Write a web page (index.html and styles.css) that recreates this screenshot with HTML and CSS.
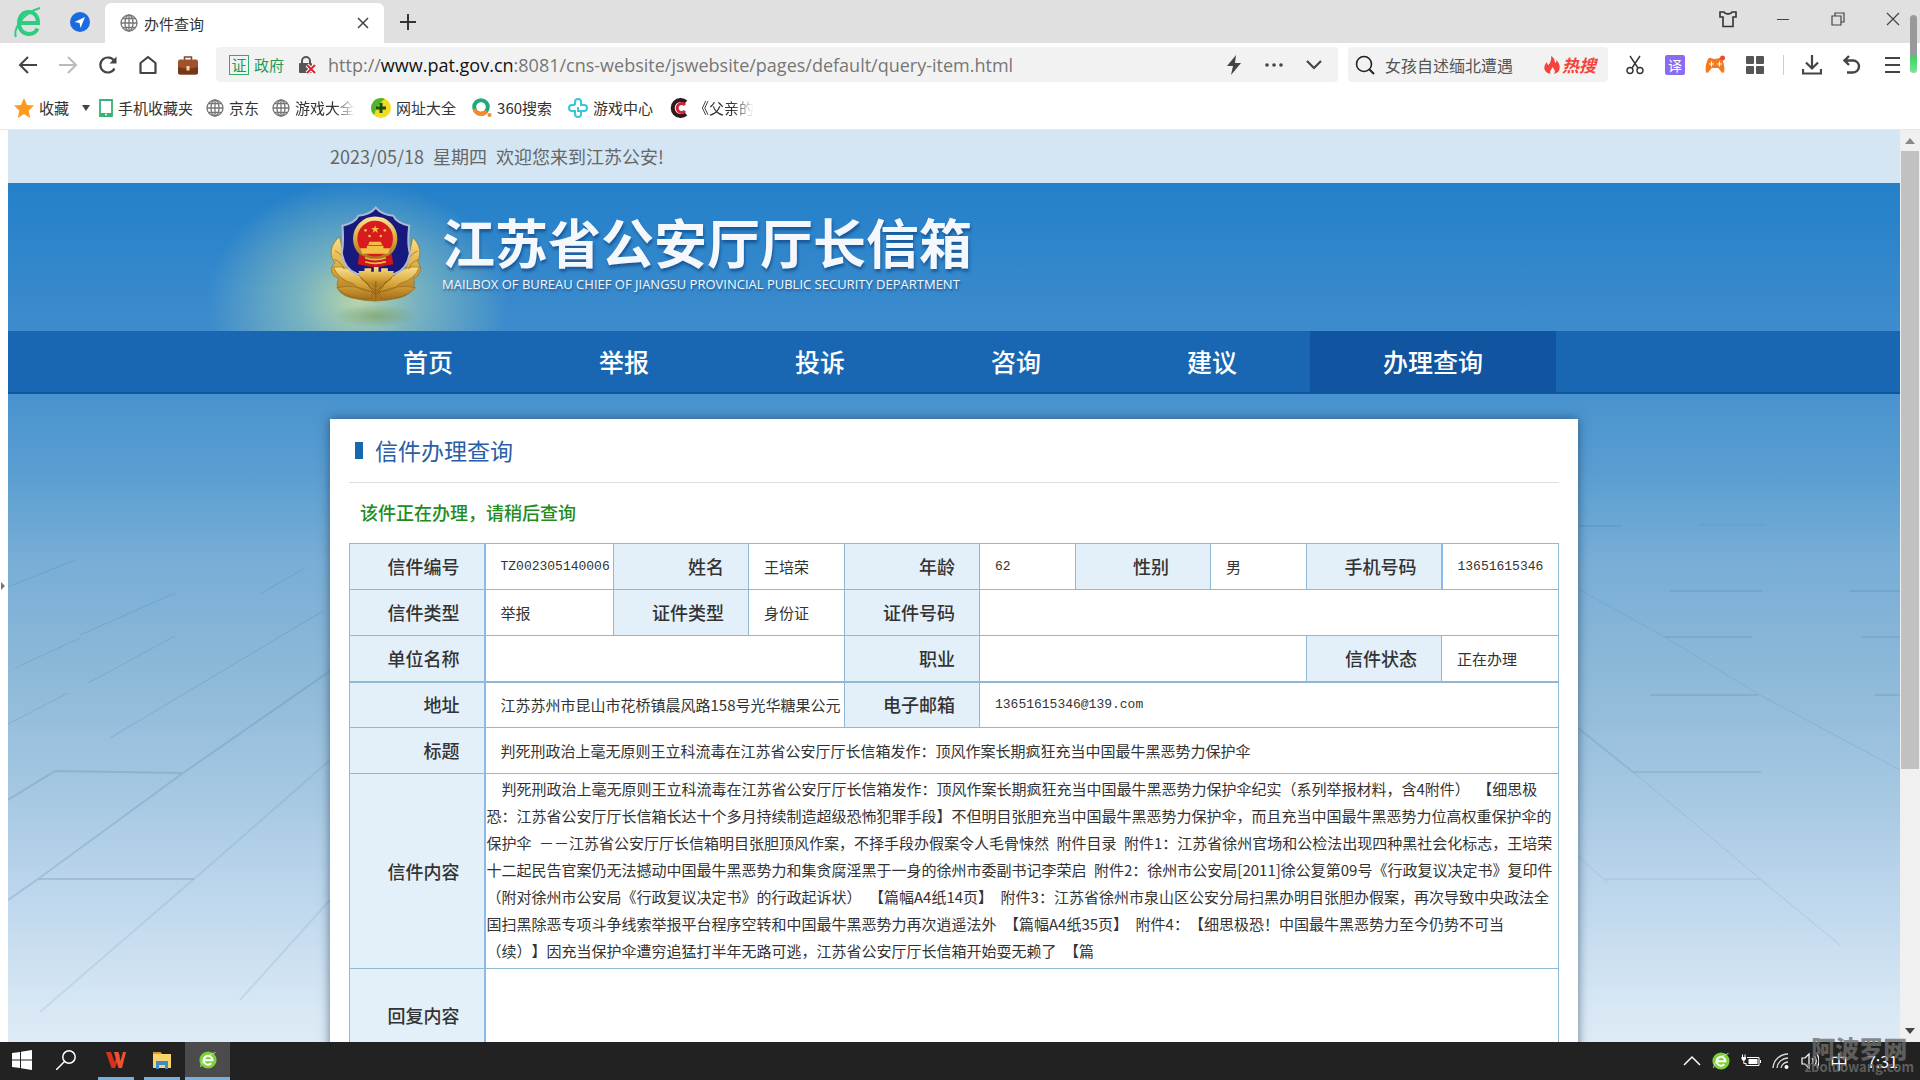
FILE: index.html
```html
<!DOCTYPE html>
<html lang="zh-CN">
<head>
<meta charset="UTF-8">
<meta name="viewport" content="width=device-width, initial-scale=1">
<title>办件查询</title>
<link rel="stylesheet" href="styles.css">
</head>
<body>
  <svg class="defs" aria-hidden="true">
    <symbol id="globe" viewBox="0 0 18 18"><g fill="none" stroke="#777" stroke-width="1.3"><circle cx="9" cy="9" r="8"/><ellipse cx="9" cy="9" rx="4" ry="8"/><path d="M9 1v16M1 9h16M2.5 4.5h13M2.5 13.5h13"/></g></symbol>
    <symbol id="e360" viewBox="0 0 18 18"><circle cx="9" cy="9" r="8.6" fill="#7ed03a"/><path d="M4.500 9.300h9a4.500 4.500 0 1 0-1.200 3" fill="none" stroke="#fff" stroke-width="2"/><path d="M1.500 16C2 11 8 4 16.500 1.500" fill="none" stroke="#d9f3c0" stroke-width=".8"/></symbol>
  </svg>

  <!-- Onglets du navigateur -->
  <header class="tabbar">
    <svg class="logo" viewBox="0 0 28 32"><g fill="none" stroke="#2ecc80"><path d="M5 17h19c0-7-4-11-9.500-11S5 10.500 5 17s4 11 10 11c4 0 7-2 8.500-5.500" stroke-width="4"/><path d="M2 31C-1 24 8 7 26 2" stroke-width="2"/></g></svg>
    <svg class="compass" viewBox="0 0 20 20"><circle cx="10" cy="10" r="10" fill="#1a6be0"/><path d="M15 5L4.500 10l5 1 1 5z" fill="#fff"/></svg>
    <div class="tab">
      <svg class="i18"><use href="#globe"/></svg>
      <span>办件查询</span>
      <button class="btn" aria-label="关闭标签"><svg width="12" height="12" viewBox="0 0 12 12"><path d="M1 1l10 10M11 1L1 11" stroke="#444" stroke-width="1.500"/></svg></button>
    </div>
    <button class="btn" aria-label="新标签页"><svg width="16" height="16" viewBox="0 0 16 16"><path d="M8 0v16M0 8h16" stroke="#333" stroke-width="2"/></svg></button>
    <div class="window-btns">
      <button class="btn" aria-label="皮肤"><svg width="18" height="18" viewBox="0 0 18 18"><path d="M1 2h4c1 2.500 7 2.500 8 0h4v5h-3v9.500H4V7H1z" fill="none" stroke="#333" stroke-width="1.600"/></svg></button>
      <button class="btn" aria-label="最小化"><svg width="18" height="18" viewBox="0 0 18 18"><path d="M3 9.500h12" stroke="#444"/></svg></button>
      <button class="btn" aria-label="还原"><svg width="18" height="18" viewBox="0 0 18 18"><path d="M3 6h9v9H3zM6 6V3h9v9h-3" fill="none" stroke="#444" stroke-width="1.200"/></svg></button>
      <button class="btn" aria-label="关闭"><svg width="18" height="18" viewBox="0 0 18 18"><path d="M3 3l12 12M15 3L3 15" stroke="#444" stroke-width="1.200"/></svg></button>
    </div>
  </header>

  <!-- Barre d'adresse -->
  <div class="toolbar">
    <nav class="nav-btns">
      <button class="btn" aria-label="后退"><svg class="i20" viewBox="0 0 20 20"><path d="M10 2L2 10l8 8M2 10h17" fill="none" stroke="#444" stroke-width="2"/></svg></button>
      <button class="btn" aria-label="前进"><svg class="i20" viewBox="0 0 20 20"><path d="M10 2l8 8-8 8M18 10H1" fill="none" stroke="#bbb" stroke-width="2"/></svg></button>
      <button class="btn" aria-label="刷新"><svg class="i20" viewBox="0 0 20 20"><path d="M16.500 13.500a7.500 7.500 0 1 1 0-7" fill="none" stroke="#444" stroke-width="2.200"/><path d="M18.500 1.500v7h-7z" fill="#444"/></svg></button>
      <button class="btn" aria-label="主页"><svg class="i20" viewBox="0 0 20 20"><path d="M2.500 8L10 2l7.500 6v10h-15z" fill="none" stroke="#444" stroke-width="2.200" stroke-linejoin="round"/></svg></button>
      <button class="btn" aria-label="工具箱"><svg class="i20" viewBox="0 0 20 20"><path d="M6.500 5V2h7v3" fill="none" stroke="#7b4a33" stroke-width="1.500"/><rect x="0" y="4.500" width="20" height="15" rx="2" fill="#a0522f"/><path d="M0 12q10 3 20 0v5.500a2 2 0 0 1-2 2H2a2 2 0 0 1-2-2z" fill="#753719"/><rect x="8.500" y="11" width="3" height="4.500" fill="#f4d9a0"/></svg></button>
    </nav>
    <div class="address">
      <span class="cert">证</span>
      <span class="gov">政府</span>
      <svg class="i18" viewBox="0 0 18 18"><path d="M4 8V5a4 4 0 0 1 8 0v3" fill="none" stroke="#555" stroke-width="2"/><rect x="1" y="7" width="13" height="10" rx="1" fill="#555"/><path d="M9 9l8 8M17 9l-8 8" stroke="#fff" stroke-width="4"/><path d="M9 9l8 8M17 9l-8 8" stroke="#d9262c" stroke-width="2"/></svg>
      <span class="url">http://<b>www.pat.gov.cn</b>:8081/cns-website/jswebsite/pages/default/query-item.html</span>
      <button class="btn" aria-label="极速模式"><svg class="i20" viewBox="0 0 20 20"><path d="M12 0L3 11h6l-2 9 10-12h-6z" fill="#444"/></svg></button>
      <button class="btn" aria-label="更多"><svg class="i20" viewBox="0 0 20 20"><g fill="#444"><circle cx="3" cy="10" r="1.800"/><circle cx="10" cy="10" r="1.800"/><circle cx="17" cy="10" r="1.800"/></g></svg></button>
      <button class="btn" aria-label="展开"><svg class="i20" viewBox="0 0 20 20"><path d="M3 6l7 7 7-7" fill="none" stroke="#444" stroke-width="2.200"/></svg></button>
    </div>
    <div class="search">
      <svg class="i20" viewBox="0 0 20 20"><path d="M14.500 14.500L19 19" stroke="#222" stroke-width="2"/><circle cx="9" cy="9" r="7.500" fill="none" stroke="#222" stroke-width="1.600"/></svg>
      <input type="text" value="女孩自述缅北遭遇" aria-label="搜索">
      <a class="hot" href="#"><svg width="16" height="18" viewBox="0 0 16 18"><path d="M7 0c5 3 3 6 4.500 7 1-1 1-2 1-3C18 10 16 17 10 18c2-3 0-5-1.500-7C8 14 5 14 6.500 18-1 16-1 10 3 6c0 2 .5 2.500 1.500 3C7 6 7.500 3 7 0z" fill="#f4433c"/></svg>热搜</a>
    </div>
    <div class="tools">
      <button class="btn" aria-label="截图"><svg class="i20" viewBox="0 0 20 20"><g fill="none" stroke="#333" stroke-width="1.400"><path d="M5 1l8 12M15 1L7 13"/><circle cx="5" cy="15.500" r="3"/><circle cx="15" cy="15.500" r="3"/></g></svg></button>
      <button class="btn translate">译</button>
      <button class="btn" aria-label="游戏"><svg class="i20" viewBox="0 0 20 20"><path d="M4 3c2-1 3 1 6 1s4-2 6-1c3 3 4 11 3 14-2 3-4-3-6-4H7c-2 1-4 7-6 4C0 14 1 6 4 3z" fill="#f5791f"/><path d="M6.500 6.500v5M4 9h5M12 9h5M14.500 6.500v5" stroke="#fff" stroke-width="1.200"/><circle cx="17.500" cy="3" r="2.500" fill="#f4433c"/></svg></button>
      <button class="btn" aria-label="扩展"><svg class="i20" viewBox="0 0 20 20"><g fill="#555"><rect x="1" y="1" width="8" height="8" rx="1"/><rect x="11" y="1" width="8" height="8" rx="1"/><rect x="1" y="11" width="8" height="8" rx="1"/><rect x="11" y="11" width="8" height="8" rx="1"/></g></svg></button>
      <span class="sep"></span>
      <button class="btn" aria-label="下载"><svg class="i20" viewBox="0 0 20 20"><path d="M10 0v13M4 7.500l6 6 6-6M1 14v4.500h18V14" fill="none" stroke="#444" stroke-width="2.200"/></svg></button>
      <button class="btn" aria-label="恢复"><svg class="i20" viewBox="0 0 20 20"><path d="M7 1L2.500 5.500 7 10M3 5.500h8a6 6 0 0 1 0 12H5" fill="none" stroke="#444" stroke-width="2.400"/></svg></button>
      <button class="btn" aria-label="菜单"><svg class="i20" viewBox="0 0 20 20"><path d="M3 3h15M3 10h15M3 17h15" stroke="#444" stroke-width="2.200"/></svg></button>
    </div>
  </div>

  <!-- Favoris -->
  <nav class="bookmarks">
    <a href="#"><svg class="i20" viewBox="0 0 20 20"><path d="M10 0l3 7 7 .6-5.300 5 1.600 7.400-6.300-4-6.300 4 1.600-7.400L0 7.600 7 7z" fill="#fb9a1c"/></svg>收藏</a>
    <button class="btn" aria-label="收藏菜单"><svg width="8" height="6" viewBox="0 0 8 6"><path d="M0 0h8L4 6z" fill="#444"/></svg></button>
    <a href="#"><svg width="14" height="18" viewBox="0 0 14 18"><path d="M1 1h12v16H1z" fill="#fff" stroke="#35b573" stroke-width="1.800"/><path d="M1 14h12v3H1z" fill="#35b573"/><circle cx="7" cy="15.500" r="1" fill="#fff"/></svg>手机收藏夹</a>
    <a href="#"><svg class="i18"><use href="#globe"/></svg>京东</a>
    <a class="fade" href="#"><svg class="i18"><use href="#globe"/></svg>游戏大全</a>
    <a class="site" href="#"><svg class="i20" viewBox="0 0 20 20"><circle cx="10" cy="10" r="10" fill="#f2dc1d"/><path d="M10 0A10 10 0 0 0 3 17C5 11 8 5 14 1q-2-1-4-1z" fill="#4fb52f"/><path d="M10 5v10M5 10h10" stroke="#174d16" stroke-width="3"/></svg>网址大全</a>
    <a class="site" href="#"><svg class="i20" viewBox="0 0 20 20"><circle cx="9" cy="9" r="6.800" fill="none" stroke="#20a87a" stroke-width="4"/><path d="M2.500 11a6.800 6.800 0 0 0 12 2" fill="none" stroke="#f58a2a" stroke-width="4"/><circle cx="17.500" cy="17" r="2" fill="#f58a2a"/></svg>360搜索</a>
    <a class="site" href="#"><svg class="i20" viewBox="0 0 20 20"><path d="M7 7V4a3 3 0 0 1 6 0v3h3a3 3 0 0 1 0 6h-6V9M7 7H4a3 3 0 0 0 0 6h3v3a3 3 0 0 0 6 0v-3" fill="none" stroke="#34c8d8" stroke-width="2"/></svg>游戏中心</a>
    <a class="site fade" href="#"><svg class="i20" viewBox="0 0 20 20"><path d="M17 4a8 8 0 1 0 0 12" fill="none" stroke="#30191c" stroke-width="4"/><path d="M16 7a4.500 4.500 0 1 0 0 6" fill="none" stroke="#d81f36" stroke-width="3"/></svg>《父亲的</a>
  </nav>

  <div class="viewport">
    <div class="side-strip"><svg width="6" height="8" viewBox="0 0 6 8"><path d="M1 0l4 4-4 4z" fill="#777"/></svg></div>
    <div class="page">
      <div class="welcome"><p class="inner">2023/05/18&ensp;星期四&ensp;欢迎您来到江苏公安!</p></div>
      <div class="banner">
        <div class="inner brand">
          <svg class="emblem" viewBox="60 45 275 375">
            <defs>
              <linearGradient id="gold" x1="0" y1="0" x2="0" y2="1"><stop offset="0" stop-color="#f7e08c"/><stop offset=".5" stop-color="#d9a93c"/><stop offset="1" stop-color="#a8701c"/></linearGradient>
              <radialGradient id="reflet"><stop offset="0" stop-color="#6f8f4a" stop-opacity=".5"/><stop offset="1" stop-color="#6f8f4a" stop-opacity="0"/></radialGradient>
            </defs>
            <ellipse cx="198" cy="375" rx="130" ry="34" fill="url(#reflet)"/>
            <g fill="url(#gold)" stroke="#94661a" stroke-width="2">
              <path d="M88 138C60 160 55 195 75 215 58 228 60 255 86 262 74 285 82 312 130 322q65 16 130 0c48-10 58-37 50-60 24-10 26-35 12-50 14-25 6-54-14-72l-20 90-90 40-88-40z"/>
              <path d="M70 228q45-4 75 25 38 15 52 50-50-2-68-25-45-12-59-50zM328 228q-45-4-75 25-38 15-52 50 50-2 68-25 45-12 59-50zM80 290q50-12 108 14l-4 20q-70 4-104-34zM316 290q-50-12-108 14l4 20q70 4 104-34z"/>
              <path d="M75 180q25 10 35 45M322 180q-25 10-35 45M72 205q22 8 30 30M325 205q-22 8-30 30" fill="none"/>
            </g>
            <path d="M197 50q18 22 52 24 10 22 48 30-6 55 2 82-8 50-45 62-40 2-57 20-17-18-57-20-37-12-45-62 6-30 2-82 38-8 48-30 34-2 52-24z" fill="#171a7c" stroke="#aeb9d6" stroke-width="6"/>
            <path d="M145 240h18v-8h20v10h8v-14h14v14h8v-10h20v8h18l-8 28-46 22-44-22z" fill="url(#gold)"/>
            <circle cx="195" cy="143" r="60" fill="#d91a1f" stroke="url(#gold)" stroke-width="13"/>
            <g fill="#f3bf45">
              <path d="M195 103l3 8h9l-7 6 3 9-8-6-8 6 3-9-7-6h9z"/>
              <circle cx="166" cy="118" r="4"/><circle cx="178" cy="135" r="4"/><circle cx="212" cy="135" r="4"/><circle cx="224" cy="118" r="4"/>
              <path d="M178 152h34l4 10h-42zM170 164h50v8h-50zM150 172h90l-6 16h-78z"/>
            </g>
            <path d="M147 190l18 8q30 12 60 0l20-8 4 30-24 4q-30 8-60 0l-22-4z" fill="#cf161b"/>
            <path d="M165 212q30 10 62 0M165 200q30 12 62 0" fill="none" stroke="#e8bd50" stroke-width="5"/>
            <path d="M197 270v55M165 270l30 40M230 270l-30 40M150 258l45 42M246 258l-46 42" stroke="#8f6216" stroke-width="3"/>
          </svg>
          <div class="brand-text">
            <h1>江苏省公安厅厅长信箱</h1>
            <p>MAILBOX OF BUREAU CHIEF OF JIANGSU PROVINCIAL PUBLIC SECURITY DEPARTMENT</p>
          </div>
        </div>
      </div>
      <nav class="menu">
        <div class="inner">
          <a href="#">首页</a><a href="#">举报</a><a href="#">投诉</a><a href="#">咨询</a><a href="#">建议</a><a class="active" href="#">办理查询</a>
        </div>
      </nav>

      <main class="content">
        <svg class="tiles left" width="322" height="648" viewBox="0 0 322 648" aria-hidden="true">
          <g fill="none" stroke="#3f7094">
            <path opacity=".22" d="M0 193l67-27M7 274l65-30M72 241l95-42M80 289l87-47M252 200l45-26M0 330l60-31M102 344l213-127"/>
            <path opacity=".2" stroke-width="2" d="M0 506l30-21 145-106 147-102M0 406l47-29 128 2M30 485h156"/>
            <path opacity=".12" stroke-width="2" d="M32 618l154-133 136-119M232 606l90-100"/>
          </g>
        </svg>
        <svg class="tiles right" width="340" height="648" viewBox="1560 394 340 648" aria-hidden="true">
          <g fill="none" stroke="#3f7094">
            <path opacity=".16" stroke-width="2" d="M1578 728l55 44h128M1665 637h87M1670 591h92M1850 591h50M1862 637h38M1650 695h108M1875 695h25M1580 526h42"/>
            <path opacity=".16" d="M1580 590l85 47 95 58 140 75M1633 772l60 50 67 57 80 66M1605 879h155M1578 856l30 27M1700 525h65"/>
          </g>
        </svg>
        <section class="card">
          <h2>信件办理查询</h2>
          <p class="status">该件正在办理，请稍后查询</p>
          <table>
            <colgroup>
              <col class="label"><col class="c-num"><col class="label"><col class="c-sm"><col class="label"><col class="c-sm"><col class="label"><col class="c-sm"><col class="label"><col class="c-tel">
            </colgroup>
            <tbody>
              <tr>
                <th>信件编号</th><td class="num">TZ002305140006</td>
                <th>姓名</th><td>王培荣</td>
                <th>年龄</th><td class="num">62</td>
                <th class="wide">性别</th><td>男</td>
                <th>手机号码</th><td class="num">13651615346</td>
              </tr>
              <tr>
                <th>信件类型</th><td>举报</td>
                <th>证件类型</th><td>身份证</td>
                <th>证件号码</th><td colspan="5"></td>
              </tr>
              <tr>
                <th>单位名称</th><td colspan="3"></td>
                <th>职业</th><td colspan="3"></td>
                <th>信件状态</th><td>正在办理</td>
              </tr>
              <tr class="strong">
                <th>地址</th><td colspan="3">江苏苏州市昆山市花桥镇晨风路158号光华糖果公元</td>
                <th>电子邮箱</th><td class="num" colspan="5">13651615346@139.com</td>
              </tr>
              <tr>
                <th>标题</th><td colspan="9">判死刑政治上毫无原则王立科流毒在江苏省公安厅厅长信箱发作：顶风作案长期疯狂充当中国最牛黑恶势力保护伞</td>
              </tr>
              <tr>
                <th>信件内容</th>
                <td class="letter" colspan="9">&emsp;判死刑政治上毫无原则王立科流毒在江苏省公安厅厅长信箱发作：顶风作案长期疯狂充当中国最牛黑恶势力保护伞纪实（系列举报材料，含4附件）&ensp;【细思极<br>恐：江苏省公安厅厅长信箱长达十个多月持续制造超级恐怖犯罪手段】不但明目张胆充当中国最牛黑恶势力保护伞，而且充当中国最牛黑恶势力位高权重保护伞的<br>保护伞&ensp;－－江苏省公安厅厅长信箱明目张胆顶风作案，不择手段办假案令人毛骨悚然&ensp;附件目录&ensp;附件1：江苏省徐州官场和公检法出现四种黑社会化标志，王培荣<br>十二起民告官案仍无法撼动中国最牛黑恶势力和集贪腐淫黑于一身的徐州市委副书记李荣启&ensp;附件2：徐州市公安局[2011]徐公复第09号《行政复议决定书》复印件<br>（附对徐州市公安局《行政复议决定书》的行政起诉状）&ensp;【篇幅A4纸14页】&ensp;附件3：江苏省徐州市泉山区公安分局扫黑办明目张胆办假案，再次导致中央政法全<br>国扫黑除恶专项斗争线索举报平台程序空转和中国最牛黑恶势力再次逍遥法外&ensp;【篇幅A4纸35页】&ensp;附件4：【细思极恐！中国最牛黑恶势力至今仍势不可当<br>（续）】因充当保护伞遭穷追猛打半年无路可逃，江苏省公安厅厅长信箱开始耍无赖了&ensp;【篇</td>
              </tr>
              <tr class="reply">
                <th>回复内容</th><td colspan="9"></td>
              </tr>
            </tbody>
          </table>
        </section>
      </main>
    </div>
    <div class="scrollbar">
      <svg width="10" height="6" viewBox="0 0 10 6"><path d="M0 6h10L5 0z" fill="#888"/></svg>
      <div class="thumb"></div>
      <svg width="10" height="6" viewBox="0 0 10 6"><path d="M0 0h10L5 6z" fill="#444"/></svg>
    </div>
  </div>

  <!-- Barre des tâches -->
  <footer class="taskbar">
    <button class="task" aria-label="开始"><svg class="i20" viewBox="0 0 20 20"><path d="M0 3l8-1v7.500H0zM9 1.800L20 0v9.500H9zM0 10.500h8V18l-8-1zM9 10.500h11V20L9 18.200z" fill="#fff"/></svg></button>
    <button class="task" aria-label="搜索"><svg class="i20" viewBox="0 0 20 20"><circle cx="13" cy="7" r="6.200" fill="none" stroke="#fff" stroke-width="1.500"/><path d="M8.500 11.500L0 20" stroke="#fff" stroke-width="1.500"/></svg></button>
    <button class="task open" aria-label="WPS"><svg class="i20" viewBox="0 0 20 20"><path d="M0 2h5l3.500 10L11 5h3l-5 13H5.500z" fill="#d8301f"/><path d="M8 2h4.500l2 9L17 2h3l-4 16h-3.500z" fill="#f0512f"/></svg></button>
    <button class="task open" aria-label="文件资源管理器"><svg class="i20" viewBox="0 0 20 20"><path d="M1 2h7l2 2h9v14H1z" fill="#fbd36b"/><path d="M1 2h7l2 2H1z" fill="#d99a28"/><path d="M4 19v-8h12v8h-3v-4H7v4z" fill="#3c8ecb"/></svg></button>
    <button class="task open current" aria-label="360浏览器"><svg class="i18"><use href="#e360"/></svg></button>
    <div class="tray">
      <svg class="i18" viewBox="0 0 18 18"><path d="M1 13l8-8 8 8" fill="none" stroke="#fff" stroke-width="1.500"/></svg>
      <svg class="i18"><use href="#e360"/></svg>
      <svg class="i20" viewBox="0 0 20 18"><path d="M6 5.500h12v8H5v-2.500" fill="none" stroke="#fff"/><path d="M7.500 7h9v5h-9zM19 8h1v3h-1z" fill="#fff"/><path d="M1.500 2.500V5M4 2.500V5M2.800 8v3.500h2" fill="none" stroke="#fff"/><path d="M.5 5H5v2L4 8.500H1.500L.5 7z" fill="#fff"/></svg>
      <svg class="i18" viewBox="0 0 18 18"><g fill="none" stroke="#ddd" stroke-width="1.300"><path d="M1 16A15 15 0 0 1 16 2M5 16A11 11 0 0 1 16 6M9 16a7 7 0 0 1 7-6"/></g><circle cx="14.500" cy="15" r="2" fill="#fff"/></svg>
      <svg class="i18" viewBox="0 0 18 18"><path d="M1 6h3l4-4v14l-4-4H1zM11 6q2 3 0 6M13.500 4q3.500 5 0 10M16 2q4 7 0 14" fill="none" stroke="#fff" stroke-width="1.200"/></svg>
      <span>中</span>
      <time>7:31</time>
    </div>
  </footer>

  <div class="float-bar" aria-hidden="true"></div>
  <div class="watermark"><b>阿波罗网</b><span>zboluowang.com</span></div>
</body>
</html>
```
FILE: styles.css
```css
:root {
  --police: "Noto Sans CJK SC", "Noto Sans", sans-serif;
  --bleu: #1967b2;
  --bordure: #8fb9d3;
  --fond-label: #e3f0fa;
}
* {
  box-sizing: border-box;
}
body {
  margin: 0;
  height: 100vh;
  display: flex;
  flex-direction: column;
  overflow: hidden;
  font-family: var(--police);
  font-size: 15px;
  color: #333;
  background: #fff;
}
h1, h2, p {
  margin: 0;
}
a {
  color: inherit;
  text-decoration: none;
}
svg {
  display: block;
  flex: none;
}
.defs {
  position: absolute;
  width: 0;
  height: 0;
}
.i18 {
  width: 18px;
  height: 18px;
}
.i20 {
  width: 20px;
  height: 20px;
}
.btn {
  border: none;
  background: none;
  padding: 0;
  font-family: var(--police);
  cursor: pointer;
}

/* Onglets */
.tabbar {
  display: flex;
  align-items: center;
  height: 43px;
  flex: none;
  padding-left: 14px;
  background: #e0e0e0;
}
.logo {
  width: 28px;
  height: 32px;
}
.compass {
  width: 20px;
  height: 20px;
  margin: 0 15px 0 28px;
}
.tab {
  display: flex;
  align-items: center;
  align-self: flex-end;
  gap: 6px;
  width: 279px;
  height: 40px;
  margin-right: 16px;
  padding: 0 15px;
  border-radius: 6px 6px 0 0;
  background: #fff;
}
.tab .btn {
  margin-left: auto;
}
.window-btns {
  display: flex;
  gap: 37px;
  margin: 0 18px 6px auto;
}

/* Barre d'adresse */
.toolbar {
  display: flex;
  align-items: center;
  height: 43px;
  flex: none;
  padding: 0 18px;
}
.nav-btns {
  display: flex;
  gap: 20px;
  width: 198px;
}
.address, .search {
  display: flex;
  align-items: center;
  height: 35px;
  border-radius: 4px;
  background: #f2f2f2;
}
.address {
  flex: 1;
  gap: 20px;
  padding: 0 14px 0 13px;
}
.cert {
  width: 20px;
  border: 1px solid #2fae68;
  color: #239a58;
  text-align: center;
  line-height: 18px;
}
.gov {
  margin: 0 -6px 0 -15px;
  color: #239a58;
}
.url {
  margin: 0 auto 0 -8px;
  font-family: "Open Sans", "Noto Sans", sans-serif;
  font-size: 18px;
  color: #777;
  white-space: nowrap;
}
.url b {
  font-weight: 400;
  color: #111;
}
.search {
  width: 260px;
  margin-left: 10px;
  padding: 0 12px 0 7px;
}
.search input {
  flex: 1;
  min-width: 0;
  border: none;
  outline: none;
  padding: 0 0 0 10px;
  background: none;
  font-family: var(--police);
  font-size: 16px;
  color: #555;
}
.hot {
  display: flex;
  align-items: center;
  gap: 2px;
  font-size: 17px;
  font-weight: 700;
  font-style: italic;
  color: #f4433c;
}
.tools {
  display: flex;
  align-items: center;
  gap: 20px;
  margin-left: 17px;
}
.translate {
  width: 20px;
  height: 20px;
  border-radius: 2px;
  background: #8b6cf0;
  color: #fff;
  font-size: 14px;
  line-height: 20px;
}
.sep {
  width: 1px;
  height: 20px;
  margin: 0 -2px;
  background: #ccc;
}

/* Favoris */
.bookmarks {
  display: flex;
  align-items: center;
  gap: 13px;
  height: 44px;
  flex: none;
  padding: 0 14px;
  border-bottom: 1px solid #e2e8ec;
}
.bookmarks a {
  display: flex;
  align-items: center;
  gap: 5px;
}
.bookmarks .site {
  margin-left: 3px;
}
.bookmarks .btn {
  margin-right: -4px;
}
.fade {
  -webkit-mask-image: linear-gradient(90deg, #000 75%, transparent);
  mask-image: linear-gradient(90deg, #000 75%, transparent);
}

/* Page du site */
.viewport {
  display: flex;
  flex: 1;
  min-height: 0;
}
.side-strip {
  display: flex;
  align-items: center;
  width: 8px;
}
.page {
  display: flex;
  flex-direction: column;
  flex: 1;
  min-width: 0;
  overflow: hidden;
}
.inner {
  width: 100%;
  max-width: 1248px;
  margin: 0 auto;
}
.welcome {
  flex: none;
  background: #d4e6f4;
  font-size: 18px;
  line-height: 53px;
  color: #666;
}
.banner {
  flex: none;
  background:
    radial-gradient(ellipse 150px 120px at 350px 118px, rgba(205, 226, 165, .85) 0, rgba(160, 205, 185, .6) 40%, rgba(60, 140, 205, 0) 100%),
    linear-gradient(#2380c9, #3e8ccd);
}
.brand {
  display: flex;
  gap: 20px;
  height: 148px;
  padding-top: 23px;
}
.emblem {
  width: 92px;
  height: 125px;
}
.brand-text {
  color: #f4f7fb;
}
.brand-text h1 {
  font-size: 53px;
  font-weight: 700;
  line-height: 71px;
  text-shadow: 1px 3px 3px rgba(10, 60, 120, .6);
}
.brand-text p {
  font-family: "Open Sans", "Noto Sans", sans-serif;
  font-size: 13px;
  line-height: 14px;
  text-shadow: 1px 2px 2px rgba(10, 60, 120, .6);
}
.menu {
  flex: none;
  background: var(--bleu);
  border-bottom: 2px solid #0f579f;
}
.menu .inner {
  display: flex;
}
.menu a {
  padding: 0 73px;
  font-size: 25px;
  font-weight: 500;
  line-height: 61px;
  color: #fff;
}
.menu .active {
  background: #1155a0;
}
.content {
  position: relative;
  flex: 1;
  min-height: 0;
  padding-top: 25px;
  overflow: hidden;
  background: linear-gradient(#4892cf 0, #5b9fd1 13%, #79aed6 26%, #8fbad9 45%, #a6c8e2 62%, #bed7ed 78%, #d5e6f3 93%, #deebf6 100%);
}
.tiles {
  position: absolute;
  top: 0;
}
.left {
  left: 0;
}
.right {
  right: 0;
}
.card {
  position: relative;
  width: 100%;
  max-width: 1248px;
  margin: 0 auto;
  padding: 0 19px 40px;
  background: #fff;
  box-shadow: 0 0 10px rgba(20, 50, 80, .6);
}
.card h2 {
  display: flex;
  align-items: center;
  gap: 12px;
  padding-left: 6px;
  border-bottom: 1px solid #d9dfe3;
  font-size: 23px;
  font-weight: 400;
  line-height: 63px;
  color: #2a5fa8;
}
.card h2::before {
  content: "";
  width: 8px;
  height: 17px;
  background: #1668ac;
}
.status {
  padding: 0 0 2px 11px;
  font-size: 18px;
  font-weight: 500;
  line-height: 58px;
  color: #238c1e;
}
table {
  width: 100%;
  table-layout: fixed;
  border-collapse: collapse;
}
.label {
  width: 135px;
}
.c-num {
  width: 129px;
}
.c-sm {
  width: 96px;
}
.c-tel {
  width: 117px;
}
th, td {
  height: 46px;
  border: 1px solid var(--bordure);
  padding: 0;
}
th {
  padding-right: 24px;
  background: var(--fond-label);
  font-size: 18px;
  font-weight: 500;
  line-height: 27px;
  text-align: right;
}
th.wide {
  padding-right: 41px;
}
th:first-child, th:nth-child(9) {
  border-right: 2px solid #8abbe6;
}
td {
  padding-left: 15px;
  overflow: hidden;
  white-space: nowrap;
  text-spacing-trim: space-all;
  line-height: 27px;
}
.num {
  font-family: "Liberation Mono", monospace;
  font-size: 13px;
}
.strong th, .strong td {
  border-top-width: 2px;
}
.letter {
  padding: 1px 0 4px 1px;
}
.reply th {
  height: 94px;
}

/* Ascenseur */
.scrollbar {
  display: flex;
  flex-direction: column;
  align-items: center;
  width: 20px;
  padding: 8px 1px;
  background: #f0f0f0;
}
.thumb {
  width: 100%;
  height: 69%;
  margin: 7px 0 auto;
  background: #c1c1c1;
}

/* Barre des tâches */
.taskbar {
  display: flex;
  height: 38px;
  flex: none;
  background: #222;
}
.task {
  display: flex;
  align-items: center;
  justify-content: center;
  width: 44px;
  border: none;
  border-bottom: 3px solid transparent;
  padding: 0;
  background: none;
}
.open {
  width: 36px;
  margin-left: 10px;
  border-bottom-color: #76b0e0;
}
.current {
  width: 45px;
  margin-left: 5px;
  background: #4b4b4b;
}
.tray {
  display: flex;
  align-items: center;
  gap: 11px;
  margin-left: auto;
  padding-right: 22px;
  font-size: 18px;
  color: #fff;
}
.tray time {
  margin-left: 8px;
  font-size: 16px;
}

/* Éléments flottants par-dessus le bureau */
.float-bar {
  position: absolute;
  top: 15px;
  right: 3px;
  width: 7px;
  height: 58px;
  border-radius: 4px;
  background: linear-gradient(#999 70%, #3fd265 72%, #7be495);
}
.watermark {
  position: absolute;
  right: 6px;
  bottom: 7px;
  display: flex;
  flex-direction: column;
  align-items: center;
  color: rgba(110, 110, 110, .8);
  font-size: 13px;
  font-weight: 700;
  line-height: 13px;
}
.watermark b {
  font-size: 24px;
  line-height: 24px;
}
```
